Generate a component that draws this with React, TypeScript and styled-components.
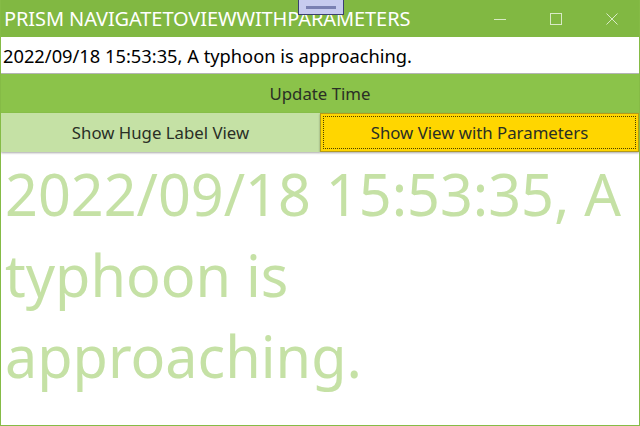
import styled, { createGlobalStyle } from 'styled-components';

const GlobalStyle = createGlobalStyle`
  html, body {
    margin: 0;
    padding: 0;
    background: #ffffff;
  }
  body {
    font-family: 'Noto Sans', 'Open Sans', sans-serif;
  }
`;

const Window = styled.div`
  position: relative;
  width: 640px;
  height: 426px;
  box-sizing: border-box;
  border: 1px solid #85bb46;
  border-top: none;
  display: flex;
  flex-direction: column;
  overflow: hidden;
  background: #ffffff;
`;

const TitleBar = styled.div`
  height: 37px;
  flex-shrink: 0;
  margin: 0 -1px;
  background-color: #81b842;
  display: flex;
  align-items: center;
  justify-content: space-between;
`;

const Title = styled.span`
  padding-left: 4px;
  color: #ffffff;
  font-size: 20px;
  letter-spacing: -0.1px;
`;

const Controls = styled.div`
  display: flex;
  height: 100%;
`;

const ControlButton = styled.div`
  width: 56px;
  height: 100%;
  display: flex;
  align-items: center;
  justify-content: center;
`;

const DebugHandle = styled.div`
  position: absolute;
  top: -1px;
  left: 297px;
  width: 46px;
  height: 16px;
  box-sizing: border-box;
  background: #c7cbef;
  border: 1px solid #3b4070;
  display: flex;
  align-items: center;
  justify-content: center;

  &::after {
    content: '';
    width: 30px;
    height: 3px;
    background: #7a80b2;
  }
`;

const TextInput = styled.input`
  height: 37px;
  flex-shrink: 0;
  box-sizing: border-box;
  border: none;
  border-bottom: 1px solid #b4b4b4;
  padding: 0 2px;
  margin: 0;
  font-family: 'Noto Sans', 'Open Sans', sans-serif;
  font-size: 18.3px;
  color: #000000;
  background: #ffffff;
  outline: none;
`;

const ActionButton = styled.div<{ $variant: 'primary' | 'light' | 'accent' }>`
  height: 39px;
  flex-shrink: 0;
  box-sizing: border-box;
  display: flex;
  align-items: center;
  justify-content: center;
  font-size: 16.8px;
  color: #2a2f25;
  background-color: ${p =>
    p.$variant === 'primary' ? '#8bc34a' : p.$variant === 'light' ? '#c5e1a5' : '#ffd600'};
  box-shadow: ${p => (p.$variant === 'primary' ? 'none' : '0 1px 2px rgba(0, 0, 0, 0.35)')};
  position: relative;

  ${p =>
    p.$variant === 'accent' &&
    `
    border: 1px solid #b39a1a;
    &::before {
      content: '';
      position: absolute;
      inset: 2px;
      border: 1px dotted #4a3f00;
    }
  `}
`;

const ButtonRow = styled.div`
  display: grid;
  grid-template-columns: 319px 1fr;
  flex-shrink: 0;
`;

const HugeLabel = styled.div`
  padding: 2px 0 0 4px;
  font-size: 57.5px;
  line-height: 81px;
  color: #c5e1a5;
`;

const stroke = 'rgba(255, 255, 255, 0.7)';

const MinimizeIcon = () => (
  <svg width="12" height="12" viewBox="0 0 12 12">
    <line x1="0" y1="6.5" x2="12" y2="6.5" stroke={stroke} strokeWidth="1" />
  </svg>
);

const MaximizeIcon = () => (
  <svg width="12" height="12" viewBox="0 0 12 12">
    <rect x="0.5" y="0.5" width="11" height="11" fill="none" stroke={stroke} strokeWidth="1" />
  </svg>
);

const CloseIcon = () => (
  <svg width="12" height="12" viewBox="0 0 12 12">
    <path d="M0.5 0.5 L11.5 11.5 M11.5 0.5 L0.5 11.5" stroke={stroke} strokeWidth="1" />
  </svg>
);

const message = '2022/09/18 15:53:35, A typhoon is approaching.';

export default function App() {
  return (
    <>
      <GlobalStyle />
      <Window>
        <TitleBar>
          <Title>PRISM NAVIGATETOVIEWWITHPARAMETERS</Title>
          <Controls>
            <ControlButton>
              <MinimizeIcon />
            </ControlButton>
            <ControlButton>
              <MaximizeIcon />
            </ControlButton>
            <ControlButton>
              <CloseIcon />
            </ControlButton>
          </Controls>
        </TitleBar>
        <DebugHandle />
        <TextInput readOnly value={message} />
        <ActionButton $variant="primary">Update Time</ActionButton>
        <ButtonRow>
          <ActionButton $variant="light">Show Huge Label View</ActionButton>
          <ActionButton $variant="accent">Show View with Parameters</ActionButton>
        </ButtonRow>
        <HugeLabel>{message}</HugeLabel>
      </Window>
    </>
  );
}
